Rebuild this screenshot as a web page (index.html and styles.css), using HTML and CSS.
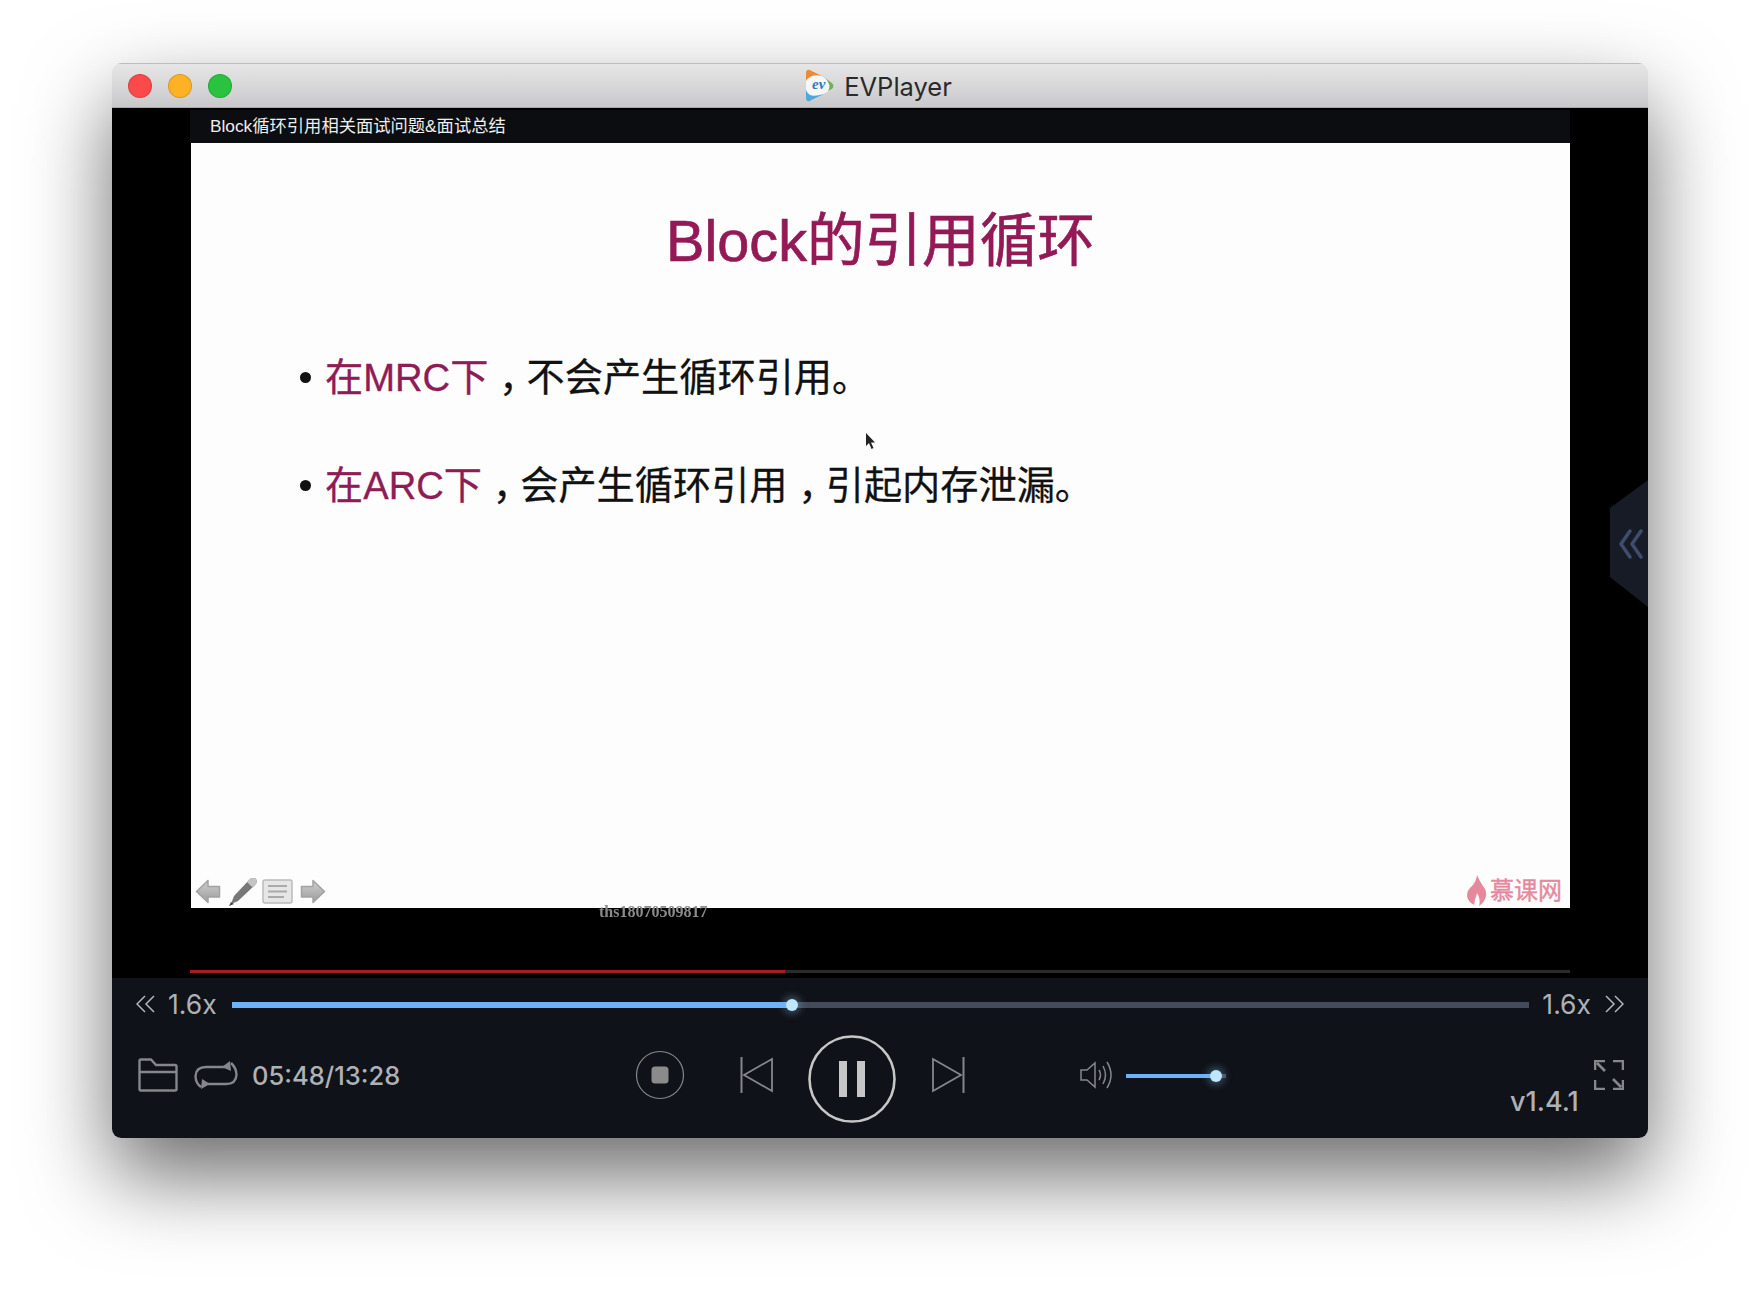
FILE: index.html
```html
<!DOCTYPE html>
<html lang="en">
<head>
  <meta charset="UTF-8">
  <title>EVPlayer</title>
  <link rel="stylesheet" href="styles.css">
</head>
<body>
  <div class="window">
    <header class="titlebar">
      <div class="lights">
        <span class="light red"></span>
        <span class="light amber"></span>
        <span class="light green"></span>
      </div>
      <svg class="app-logo" width="30" height="33" viewBox="0 0 30 33">
        <path d="M3 1 Q1 1 1 4 L1 29 Q1 32 4 32 Q6 32 8 31 L27 20 Q30 17 27 14 L8 2 Q5 1 3 1Z" fill="#f6f8f8"/>
        <path d="M1 12 L1 4 Q1 0 5 1 L17 7 Q9 5 5 8 Q2 10 1 12Z" fill="#ec8a3a"/>
        <path d="M20 9 L27 14 Q30 17 27 20 L23 22 Q27 16 20 9Z" fill="#69b45a"/>
        <path d="M1 21 L1 29 Q1 33 5 32 L19 25 Q9 28 5 26 Q2 24 1 21Z" fill="#4ea8dc"/>
        <text class="logo-ev" x="7" y="20">ev</text>
      </svg>
      <span class="app-name">EVPlayer</span>
    </header>

    <main class="video">
      <div class="stage">
        <div class="lesson-title">Block循环引用相关面试问题&amp;面试总结</div>
        <section class="slide">
          <h1 class="slide-title">Block的引用循环</h1>
          <ul class="points">
            <li><em>在MRC下</em><span class="mid-comma">，</span>不会产生循环引用。</li>
            <li><em>在ARC下</em><span class="mid-comma">，</span>会产生循环引用<span class="mid-comma">，</span>引起内存泄漏。</li>
          </ul>
          <svg class="cursor" width="12" height="18" viewBox="0 0 12 18">
            <path d="M1 0 L1 13 L4 10 L6.5 16 L8.500 15 L6 9.500 L10 9.500Z" fill="#222"/>
          </svg>
          <footer class="slide-foot">
            <div class="slide-tools">
              <svg width="26" height="25" viewBox="0 0 26 25">
                <defs>
                  <linearGradient id="toolGrey" x1="0" y1="0" x2="0" y2="1">
                    <stop offset="0" stop-color="#cfcfcf"/>
                    <stop offset="1" stop-color="#9c9c9c"/>
                  </linearGradient>
                </defs>
                <path d="M13 1.500 L1.500 12.500 L13 23.500 L13 18 L24.500 18 L24.500 7.500 L13 7.500Z" fill="url(#toolGrey)" stroke="#a2a2a2" stroke-width="1.500" stroke-linejoin="round"/>
              </svg>
              <svg width="30" height="29" viewBox="0 0 30 29">
                <path d="M22 2 Q25 0 28 2 Q30 5 27 8 L10 24 L3 27 L6 19Z" fill="#777"/>
                <path d="M22 2 Q25 0 28 2 Q30 5 27 8 L24 10 L19 5Z" fill="#c4c4c4"/>
                <path d="M1 29 L3 25 L6 27Z" fill="#444"/>
              </svg>
              <svg class="tool-menu" width="31" height="25" viewBox="0 0 31 25">
                <rect x="1" y="1" width="29" height="23" rx="2" fill="#e6e6e6" stroke="#bbb" stroke-width="1.500"/>
                <path d="M6 7 H25 M6 12.500 H25 M6 18 H22" stroke="#aaa" stroke-width="2"/>
              </svg>
              <svg width="26" height="25" viewBox="0 0 26 25">
                <path d="M13 1.500 L24.500 12.500 L13 23.500 L13 18 L1.500 18 L1.500 7.500 L13 7.500Z" fill="url(#toolGrey)" stroke="#a2a2a2" stroke-width="1.500" stroke-linejoin="round"/>
              </svg>
            </div>
            <div class="brand">
              <svg width="20" height="31" viewBox="0 0 20 31">
                <path d="M10 0 Q13 7 16 11 Q20 16 19 21 Q18 27 12 31 Q14 24 10 18 Q8 24 7 30 Q1 27 0 21 Q0 15 5 11 Q9 7 10 0Z" fill="#e58a9e"/>
              </svg>
              <span>慕课网</span>
            </div>
          </footer>
        </section>
        <div class="viewer-id">ths18070509817</div>
        <div class="video-progress"><div class="video-progress-fill"></div></div>
      </div>
      <div class="side-handle">
        <svg width="26" height="30" viewBox="0 0 26 30">
          <path d="M12 2 L3 15 L12 28 M23 2 L14 15 L23 28" fill="none" stroke="#3f4c6e" stroke-width="3.500" stroke-linecap="round" stroke-linejoin="round"/>
        </svg>
      </div>
    </main>

    <footer class="controls">
      <div class="speed-row">
        <svg class="chev" width="19" height="18" viewBox="0 0 19 18">
          <path d="M9 1 L1 9 L9 17 M18 1 L10 9 L18 17" fill="none" stroke="#b4b7bc" stroke-width="1.500"/>
        </svg>
        <span class="speed-label">1.6x</span>
        <div class="seek"><div class="seek-fill"><span class="seek-thumb"></span></div></div>
        <span class="speed-label">1.6x</span>
        <svg class="chev" width="19" height="18" viewBox="0 0 19 18">
          <path d="M1 1 L9 9 L1 17 M10 1 L18 9 L10 17" fill="none" stroke="#b4b7bc" stroke-width="1.500"/>
        </svg>
      </div>

      <div class="button-row">
        <svg class="folder" width="40" height="34" viewBox="0 0 40 34">
          <path d="M1.500 31 V3 Q1.500 1.500 3 1.500 H13 L18 7 H37 Q38.500 7 38.500 8.500 V31 Q38.500 32.500 37 32.500 H3 Q1.500 32.500 1.500 31Z M1.500 14 H38.500" fill="none" stroke="#85878b" stroke-width="2.400"/>
        </svg>
        <svg class="repeat" width="44" height="28" viewBox="0 0 44 28">
          <path d="M7 26 Q1.500 22 1.500 15 Q2 6 12 6 H31" fill="none" stroke="#85878b" stroke-width="2.400"/>
          <path d="M37 2 Q42.500 7 42.500 14 Q42 23 32 23 H14" fill="none" stroke="#85878b" stroke-width="2.400"/>
          <path d="M36 0 L37 10 L28 6Z M7 28 L8 18 L16 23Z" fill="#85878b"/>
        </svg>
        <span class="time">05:48/13:28</span>

        <svg class="stop" width="50" height="50" viewBox="0 0 50 50">
          <circle cx="25" cy="25" r="23.500" fill="none" stroke="#85878b" stroke-width="1.200"/>
          <rect x="16.500" y="16.500" width="17" height="17" rx="3.500" fill="#8b8b8b"/>
        </svg>
        <svg class="prev" width="34" height="36" viewBox="0 0 34 36">
          <path d="M1.500 0 V36" stroke="#85878b" stroke-width="2"/>
          <path d="M32 2 V34 L4 18Z" fill="none" stroke="#85878b" stroke-width="1.800"/>
        </svg>
        <svg class="pause" width="88" height="88" viewBox="0 0 88 88">
          <circle cx="44" cy="44" r="42.500" fill="none" stroke="#c6c6c6" stroke-width="2.600"/>
          <path d="M31 26 H39 V62 H31Z M49 26 H57 V62 H49Z" fill="#c6c6c6"/>
        </svg>
        <svg class="next" width="34" height="36" viewBox="0 0 34 36">
          <path d="M2 2 V34 L30 18Z" fill="none" stroke="#85878b" stroke-width="1.800"/>
          <path d="M32.500 0 V36" stroke="#85878b" stroke-width="2"/>
        </svg>

        <svg class="speaker" width="33" height="28" viewBox="0 0 33 28">
          <path d="M1 9 H7 L15 2 V26 L7 19 H1Z" fill="none" stroke="#85878b" stroke-width="1.500"/>
          <path d="M19 9 Q22 14 19 19 M23 5 Q28 14 23 23 M27 1 Q35 14 27 27" fill="none" stroke="#85878b" stroke-width="1.500"/>
        </svg>
        <div class="volume"><div class="volume-fill"><span class="volume-thumb"></span></div></div>

        <span class="version">v1.4.1</span>
        <svg class="fullscreen" width="30" height="30" viewBox="0 0 30 30">
          <path d="M1 10 V1 H11 M19 1 H29 V10 M1 20 V29 H11 M19 29 H29 V20 M3 3 L11 11 M19 19 L27 27" fill="none" stroke="#85878b" stroke-width="2.600"/>
        </svg>
      </div>
    </footer>
  </div>
</body>
</html>
```

FILE: styles.css
```css
html, body {
  margin: 0;
  height: 100%;
  overflow: hidden;
}
body {
  background: #fff;
  font-family: Inter, "Noto Sans CJK SC", sans-serif;
}
svg {
  display: block;
  flex: none;
}

.window {
  width: 1536px;
  height: 1075px;
  margin: 63px 0 0 112px;
  display: flex;
  flex-direction: column;
  border-radius: 9px;
  overflow: hidden;
  box-shadow: 0 38px 84px 0 rgba(0, 0, 0, 0.58);
}

/* title bar */
.titlebar {
  position: relative;
  height: 45px;
  box-sizing: border-box;
  padding-right: 3px;
  display: flex;
  align-items: center;
  justify-content: center;
  gap: 9px;
  background: linear-gradient(#e7e6e7, #c9c8ca);
  border-top: 1px solid #bdbdbd;
  border-bottom: 1px solid #a9a9ab;
}
.lights {
  position: absolute;
  left: 16px;
  top: 10px;
  display: flex;
  gap: 16px;
}
.light {
  width: 24px;
  height: 24px;
  box-sizing: border-box;
  border-radius: 50%;
  border: 1px solid rgba(0, 0, 0, 0.14);
}
.red { background: #fc4a4a; }
.amber { background: #fdb225; }
.green { background: #2ac33f; }
.logo-ev {
  font-family: "Liberation Serif", serif;
  font-style: italic;
  font-weight: bold;
  font-size: 15px;
  fill: #2f78b8;
}
.app-name {
  font-size: 25.500px;
  line-height: 30px;
  margin-top: 2px;
  color: #2a2a2c;
}

/* video */
.video {
  position: relative;
  height: 870px;
  background: #000;
}
.stage {
  width: 1380px;
  height: 100%;
  margin-left: 78px;
  display: flex;
  flex-direction: column;
}
.lesson-title {
  height: 33px;
  margin-top: 2px;
  padding-left: 20px;
  background: #0c0d10;
  color: #eeeeee;
  font-family: "Liberation Sans", "Noto Sans CJK SC", sans-serif;
  font-size: 17.300px;
  line-height: 33px;
}
.slide {
  position: relative;
  height: 765px;
  margin-left: 1px;
  display: flex;
  flex-direction: column;
  background: #fdfdfd;
  font-family: "Liberation Sans", "Noto Sans CJK SC", sans-serif;
}
.slide-title {
  margin: 63px 0 0;
  text-align: center;
  color: #931a56;
  font-size: 57.600px;
  font-weight: normal;
  line-height: 70px;
  -webkit-text-stroke: 0.7px #931a56;
}
.points {
  margin: 74px 0 0;
  padding: 0 0 0 134px;
  list-style: none;
  font-size: 38.200px;
  line-height: 56px;
  color: #111;
}
.points li {
  margin-bottom: 52px;
  -webkit-text-stroke: 0.3px currentColor;
}
.points li::before {
  content: "";
  display: inline-block;
  width: 11px;
  height: 11px;
  margin: 0 14px 0 -25px;
  border-radius: 50%;
  background: #111;
  vertical-align: 0.2em;
}
.points em {
  font-style: normal;
  color: #8e1c55;
}
.mid-comma {
  margin-left: 0.28em;
  letter-spacing: -0.28em;
}
.cursor {
  position: absolute;
  left: 674px;
  top: 290px;
}
.slide-foot {
  margin-top: auto;
  height: 31px;
  padding: 0 8px 2px 4px;
  display: flex;
  justify-content: space-between;
  align-items: flex-end;
}
.slide-tools {
  display: flex;
  align-items: center;
  gap: 7px;
}
.tool-menu {
  margin-left: -3px;
}
.brand {
  display: flex;
  align-items: center;
  gap: 3px;
  color: #e58a9e;
  font-size: 24px;
  line-height: 31px;
  -webkit-text-stroke: 0.4px #e58a9e;
}
.viewer-id {
  padding-left: 409px;
  height: 14px;
  color: #8a8a8a;
  font-family: "Liberation Serif", serif;
  font-size: 16px;
  font-weight: bold;
  line-height: 7px;
  filter: blur(0.7px);
}
.video-progress {
  margin-top: auto;
  margin-bottom: 5px;
  height: 3px;
  background: #2b2b2e;
}
.video-progress-fill {
  width: 595px;
  height: 100%;
  background: #a81c20;
}
.side-handle {
  position: absolute;
  right: 0;
  top: 372px;
  width: 38px;
  height: 127px;
  display: flex;
  align-items: center;
  padding-left: 8px;
  box-sizing: border-box;
  background: #171b26;
  clip-path: polygon(0 28px, 38px 0, 38px 127px, 0 97px);
}

/* controls */
.controls {
  flex: 1;
  background: #0f1218;
  color: #aeb1b6;
}
.speed-row {
  height: 26px;
  margin-top: 13px;
  padding: 0 24px 0 24px;
  display: flex;
  align-items: center;
}
.speed-label {
  font-size: 26.500px;
  line-height: 26px;
}
.speed-row .chev:first-child {
  margin-right: 13px;
}
.speed-row .chev:last-child {
  margin-left: 14px;
}
.seek {
  flex: 1;
  height: 6px;
  margin: 2px 13px 0 15px;
  background: #434a5a;
}
.seek-fill {
  position: relative;
  width: 560px;
  height: 100%;
  background: #6cb2fb;
}
.seek-thumb {
  position: absolute;
  right: -6px;
  top: -3px;
  width: 12px;
  height: 12px;
  border-radius: 50%;
  background: #bfe6fb;
  box-shadow: 0 0 8px 2px rgba(130, 190, 230, 0.45);
}
.button-row {
  position: relative;
  height: 116px;
  padding-left: 26px;
  display: flex;
  align-items: center;
}
.repeat { margin-left: 16px; }
.time {
  margin-left: 14px;
  width: 148px;
  font-size: 25.500px;
  font-weight: 500;
  white-space: nowrap;
}
.stop { margin-left: 235px; }
.prev { margin-left: 55px; }
.pause { margin: 8px 0 0 34px; }
.next { margin-left: 35px; }
.speaker { margin-left: 115px; }
.volume {
  width: 100px;
  height: 4px;
  margin: 2px 0 0 13px;
  background: #434a5a;
}
.volume-fill {
  position: relative;
  width: 90px;
  height: 100%;
  background: #6cb2fb;
}
.volume-thumb {
  position: absolute;
  right: -6px;
  top: -4px;
  width: 12px;
  height: 12px;
  border-radius: 50%;
  background: #bfe6fb;
  box-shadow: 0 0 8px 2px rgba(130, 190, 230, 0.45);
}
.version {
  margin: 52px 0 0 284px;
  width: 84px;
  font-size: 27px;
  font-weight: 500;
}
```
